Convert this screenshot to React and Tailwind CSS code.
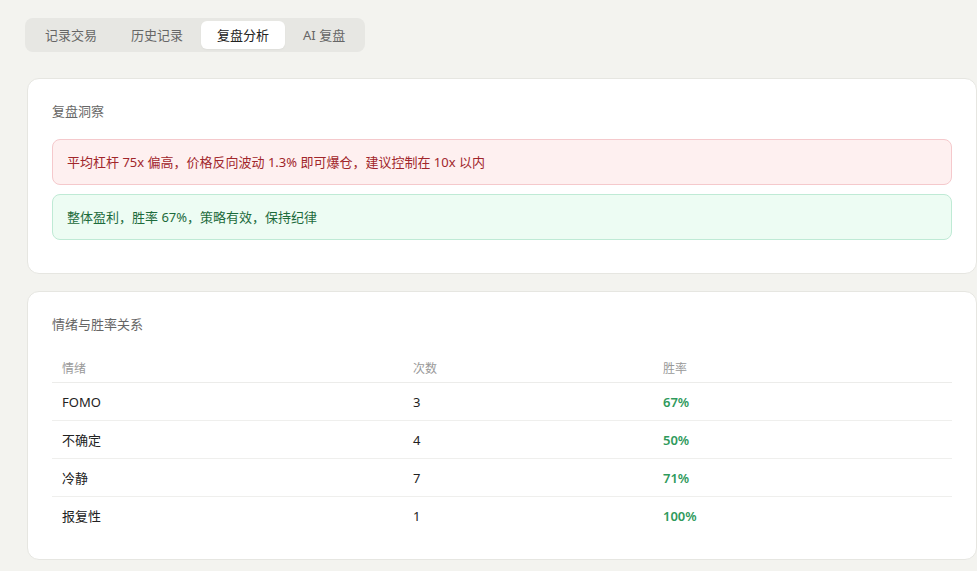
import React from 'react'

const tabs = ['记录交易', '历史记录', '复盘分析', 'AI 复盘']

const rows = [
  { mood: 'FOMO', count: 3, rate: '67%' },
  { mood: '不确定', count: 4, rate: '50%' },
  { mood: '冷静', count: 7, rate: '71%' },
  { mood: '报复性', count: 1, rate: '100%' },
]

export default function App() {
  return (
    <div className="min-h-[571px] bg-[#f3f3ef] pl-[25px] pt-[18px] text-[13px] text-[#222] [font-family:'Noto_Sans','Noto_Sans_CJK_SC',sans-serif] overflow-hidden">
      {/* Tabs */}
      <div className="inline-flex gap-[2px] rounded-lg bg-[#e7e7e3] px-1 py-[3px]">
        {tabs.map((t, i) => (
          <button
            key={t}
            className={
              i === 2
                ? 'h-7 rounded-md bg-white px-4 text-[13px] leading-7 text-[#222] shadow-[0_1px_2px_rgba(0,0,0,0.04)]'
                : 'h-7 rounded-md px-4 text-[13px] leading-7 text-[#666]'
            }
          >
            {t}
          </button>
        ))}
      </div>

      <div className="mt-[26px] ml-[2px] flex w-[950px] flex-col gap-[17px]">
        {/* Insights */}
        <div className="rounded-xl border border-[#e6e6e1] bg-white px-6 pt-[22px] pb-6">
          <h3 className="text-[13px] leading-5 text-[#666]">复盘洞察</h3>
          <div className="mt-[18px] flex flex-col">
            <div className="mb-[9px] flex h-[46px] items-center rounded-lg border border-[#f5c9cc] bg-[#fef0f0] px-[14px] leading-5 text-[#a1262b]">
              平均杠杆 75x 偏高，价格反向波动 1.3% 即可爆仓，建议控制在 10x 以内
            </div>
            <div className="mb-[9px] flex h-[46px] items-center rounded-lg border border-[#bfead5] bg-[#edfcf3] px-[14px] leading-5 text-[#1d6b3c]">
              整体盈利，胜率 67%，策略有效，保持纪律
            </div>
          </div>
        </div>

        {/* Mood vs win rate */}
        <div className="rounded-xl border border-[#e6e6e1] bg-white px-6 pt-[22px] pb-6">
          <h3 className="text-[13px] leading-5 text-[#666]">情绪与胜率关系</h3>
          <table className="mt-6 w-full border-collapse text-left">
            <thead>
              <tr className="border-b border-[#ececea]">
                <th className="w-[351px] px-[10px] pb-[3px] pt-[1px] text-[12px] font-normal leading-5 text-[#999]">情绪</th>
                <th className="w-[250px] px-[10px] pb-[3px] pt-[1px] text-[12px] font-normal leading-5 text-[#999]">次数</th>
                <th className="px-[10px] pb-[3px] pt-[1px] text-[12px] font-normal leading-5 text-[#999]">胜率</th>
              </tr>
            </thead>
            <tbody>
              {rows.map((r, i) => (
                <tr key={r.mood} className={i < rows.length - 1 ? 'border-b border-[#efefed]' : ''}>
                  <td className="h-[38px] px-[10px] leading-5">{r.mood}</td>
                  <td className="h-[38px] px-[10px] leading-5">{r.count}</td>
                  <td className="h-[38px] px-[10px] font-semibold leading-5 text-[#2f9a5c]">{r.rate}</td>
                </tr>
              ))}
            </tbody>
          </table>
        </div>
      </div>
    </div>
  )
}
